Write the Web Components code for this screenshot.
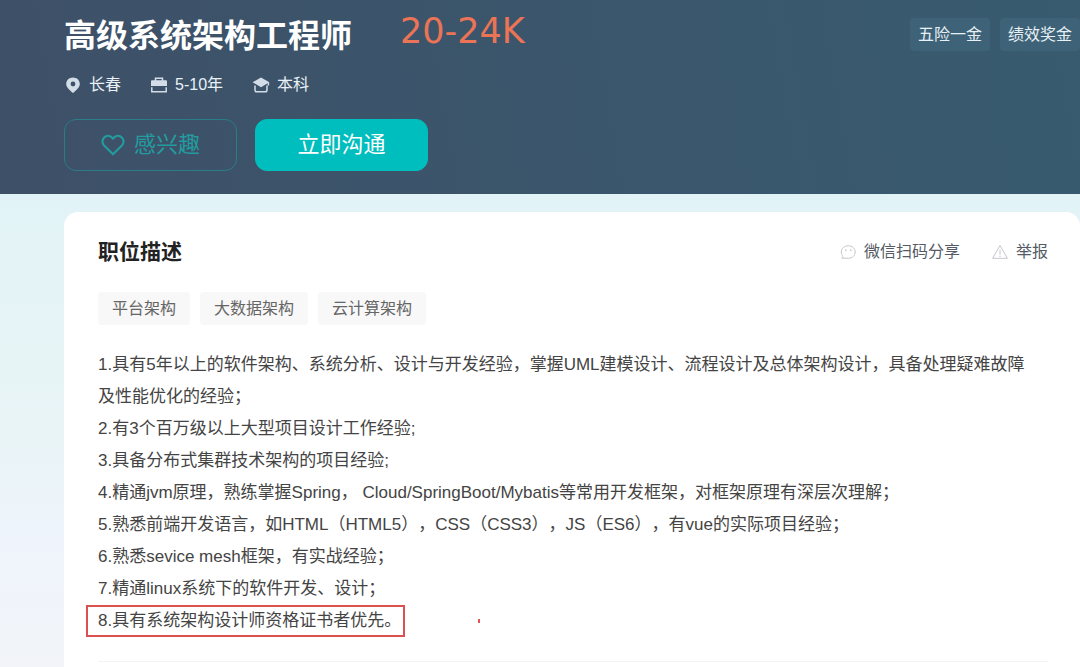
<!DOCTYPE html>
<html lang="zh-CN">
<head>
<meta charset="utf-8">
<title>高级系统架构工程师</title>
<style>
html { min-height: 100%; }
body {
  margin: 0;
  min-height: 100vh;
  font-family: "Liberation Sans", "Noto Sans CJK SC", sans-serif;
  text-spacing-trim: space-all;
  color: #414a60;
  background: linear-gradient(180deg, #dff1f7 0, #e2f3f7 200px, #e7f4f6 380px, #ebf4f8 480px, #eff4fc 540px, #f1f4f9 640px, #f2f4f8 100%);
}
</style>
</head>
<body>
<job-page></job-page>
<script>
function define(name, html) {
  const template = document.createElement('template');
  template.innerHTML = html;
  customElements.define(name, class extends HTMLElement {
    constructor() {
      super();
      this.attachShadow({ mode: 'open' }).append(template.content.cloneNode(true));
    }
  });
}

const ICONS = {
  pin: '<path fill="currentColor" fill-rule="evenodd" d="M8 0.5C4.1 0.5 1.2 3.3 1.2 7C1.2 10.2 4.4 13 8 16C11.6 13 14.8 10.2 14.8 7C14.8 3.3 11.9 0.5 8 0.5ZM8 4.6A2.4 2.4 0 1 0 8 9.4A2.4 2.4 0 1 0 8 4.6Z"/>',
  bag: '<path fill="none" stroke="currentColor" stroke-width="1.5" d="M4.5 4V1.2H11.5V4"/><path fill="currentColor" d="M1 3.2H15Q16 3.2 16 4.2V9H0V4.2Q0 3.2 1 3.2Z"/><path fill="none" stroke="currentColor" stroke-width="1.5" d="M0.8 10.2V14.8H15.2V10.2"/>',
  cap: '<path fill="currentColor" d="M8 0.4L16.4 5.2L8 10.2L-0.4 5.2Z"/><path fill="none" stroke="currentColor" stroke-width="1.5" d="M2 8.4V13Q2 14.8 3.8 14.8H12.2Q14 14.8 14 13V8.4M15.4 5.4V8.6"/>',
  heart: '<path fill="none" stroke="currentColor" stroke-width="1.4" stroke-linejoin="round" d="M8 14.2L1.9 8.1C0.6 6.7 0.7 4.4 2.1 3C3.5 1.6 5.7 1.6 7.1 2.9L8 3.8L8.9 2.9C10.3 1.6 12.5 1.6 13.9 3C15.3 4.4 15.4 6.7 14.1 8.1Z"/>',
  chat: '<path fill="none" stroke="currentColor" d="M1.8 14.2H8.6C12.5 14.2 15.2 11.4 15.2 8C15.2 4.4 12.2 1.8 8.3 1.8C4.3 1.8 1.3 4.4 1.3 8C1.3 9.8 1.9 11.2 3 12.3Z"/><path fill="currentColor" d="M5 5.4h1.5v1.6h-1.5zM10 5.4h1.5v1.6h-1.5z"/>',
  warn: '<path fill="none" stroke="currentColor" stroke-linejoin="round" d="M8 1.5L15.4 14.3H0.6ZM8 5.6V10.4M8 11.6V13"/>'
};
customElements.define('app-icon', class extends HTMLElement {
  constructor() {
    super();
    this.attachShadow({ mode: 'open' });
  }
  connectedCallback() {
    this.shadowRoot.innerHTML = `
      <style>
        :host { display: inline-flex; width: 16px; height: 16px; flex: none; }
        svg { width: 100%; height: 100%; overflow: visible; }
      </style>
      <svg viewBox="0 0 16 16" aria-hidden="true">${ICONS[this.getAttribute('name')]}</svg>`;
  }
});

define('meta-item', `
  <style>
    :host { display: flex; align-items: center; gap: 8px; font-size: 16px; line-height: 24px; white-space: nowrap; color: #e9f1f7; }
  </style>
  <slot name="icon"></slot><slot></slot>`);

define('soft-tag', `
  <style>
    :host {
      display: block; padding: 0 var(--tag-pad, 14px); border-radius: 4px;
      font-size: 16px; line-height: 33px; white-space: nowrap;
      color: var(--tag-color, #666); background: var(--tag-bg, #f8f8f8);
    }
  </style>
  <slot></slot>`);

define('action-button', `
  <style>
    :host { display: block; }
    button {
      display: flex; align-items: center; justify-content: center; gap: 9px;
      box-sizing: border-box; min-width: 173px; height: 52px; padding: 0 32px;
      border: 1px solid #00bebd; border-radius: 12px;
      font: inherit; font-size: 22px; line-height: 32px;
      color: #fff; background: #00bebd; cursor: pointer;
    }
    :host([outline]) button { color: #239c9f; background: transparent; border-color: #2a7d88; }
  </style>
  <button type="button"><slot name="icon"></slot><slot></slot></button>`);

define('tool-link', `
  <style>
    :host { display: block; }
    a { display: flex; align-items: center; gap: 8px; font-size: 16px; line-height: 24px; color: #555b66; text-decoration: none; white-space: nowrap; }
  </style>
  <a href="#"><slot name="icon"></slot><slot></slot></a>`);

define('job-banner', `
  <style>
    :host { display: block; background: linear-gradient(80deg, #3e5068 0%, #3b556b 45%, #385b70 100%); }
    header { display: flex; align-items: flex-start; justify-content: space-between; padding: 14px 0 23px 64px; }
    .headline { display: flex; align-items: flex-start; gap: 48px; }
    h1 { margin: 0; font-size: 32px; line-height: 44px; color: #fff; white-space: nowrap; }
    .salary { font-family: "DejaVu Sans", sans-serif; font-size: 35px; line-height: 34px; color: #eb7356; white-space: nowrap; }
    .meta { display: flex; gap: 30px; margin-top: 15px; padding-left: 1px; }
    .meta app-icon { color: #d2dde8; }
    .actions { display: flex; gap: 18px; margin-top: 22px; }
    .actions app-icon { width: 24px; height: 24px; }
    .perks { display: flex; gap: 10px; padding-top: 4px; --tag-pad: 8px; --tag-color: #e6f0f5; --tag-bg: #3e6277; }
  </style>
  <header>
    <div>
      <div class="headline"><h1>高级系统架构工程师</h1><span class="salary">20-24K</span></div>
      <div class="meta">
        <meta-item><app-icon slot="icon" name="pin"></app-icon>长春</meta-item>
        <meta-item><app-icon slot="icon" name="bag"></app-icon>5-10年</meta-item>
        <meta-item><app-icon slot="icon" name="cap"></app-icon>本科</meta-item>
      </div>
      <div class="actions">
        <action-button outline><app-icon slot="icon" name="heart"></app-icon>感兴趣</action-button>
        <action-button>立即沟通</action-button>
      </div>
    </div>
    <div class="perks"><soft-tag>五险一金</soft-tag><soft-tag>绩效奖金</soft-tag></div>
  </header>`);

define('job-description', `
  <style>
    :host { display: block; margin: 18px 0 0 64px; padding: 24px 32px 24px 34px; border-radius: 14px 14px 0 0; background: #fff; }
    .top { display: flex; align-items: center; justify-content: space-between; }
    h2 { margin: 0; font-size: 21px; line-height: 32px; color: #222; }
    .tools { display: flex; gap: 32px; }
    .tools app-icon { color: #c4c6ca; }
    .tags { display: flex; gap: 10px; margin: 24px 0; }
    p { margin: 0; font-size: 17px; line-height: 32px; color: #444; }
    .last { display: flex; align-items: center; gap: 73px; margin-left: -12px; }
    mark { padding: 0 2px 0 10px; border: 2px solid #dc5050; line-height: 28px; color: inherit; background: none; }
    .dot { width: 2px; height: 4px; background: #e05555; }
    hr { height: 1px; margin: 24px 0 0; border: 0; background: #f4f4f4; }
  </style>
  <div class="top">
    <h2>职位描述</h2>
    <div class="tools">
      <tool-link><app-icon slot="icon" name="chat"></app-icon>微信扫码分享</tool-link>
      <tool-link><app-icon slot="icon" name="warn"></app-icon>举报</tool-link>
    </div>
  </div>
  <div class="tags"><soft-tag>平台架构</soft-tag><soft-tag>大数据架构</soft-tag><soft-tag>云计算架构</soft-tag></div>
  <p>1.具有5年以上的软件架构、系统分析、设计与开发经验，掌握UML建模设计、流程设计及总体架构设计，具备处理疑难故障<br>及性能优化的经验；</p>
  <p>2.有3个百万级以上大型项目设计工作经验;</p>
  <p>3.具备分布式集群技术架构的项目经验;</p>
  <p>4.精通jvm原理，熟练掌握Spring， Cloud/SpringBoot/Mybatis等常用开发框架，对框架原理有深层次理解；</p>
  <p>5.熟悉前端开发语言，如HTML（HTML5），CSS（CSS3），JS（ES6），有vue的实际项目经验；</p>
  <p>6.熟悉sevice mesh框架，有实战经验；</p>
  <p>7.精通linux系统下的软件开发、设计；</p>
  <p class="last"><mark>8.具有系统架构设计师资格证书者优先。</mark><span class="dot"></span></p>
  <hr>`);

define('job-page', `
  <style>:host { display: block; overflow: hidden; }</style>
  <job-banner></job-banner>
  <main><job-description></job-description></main>`);
</script>
</body>
</html>
